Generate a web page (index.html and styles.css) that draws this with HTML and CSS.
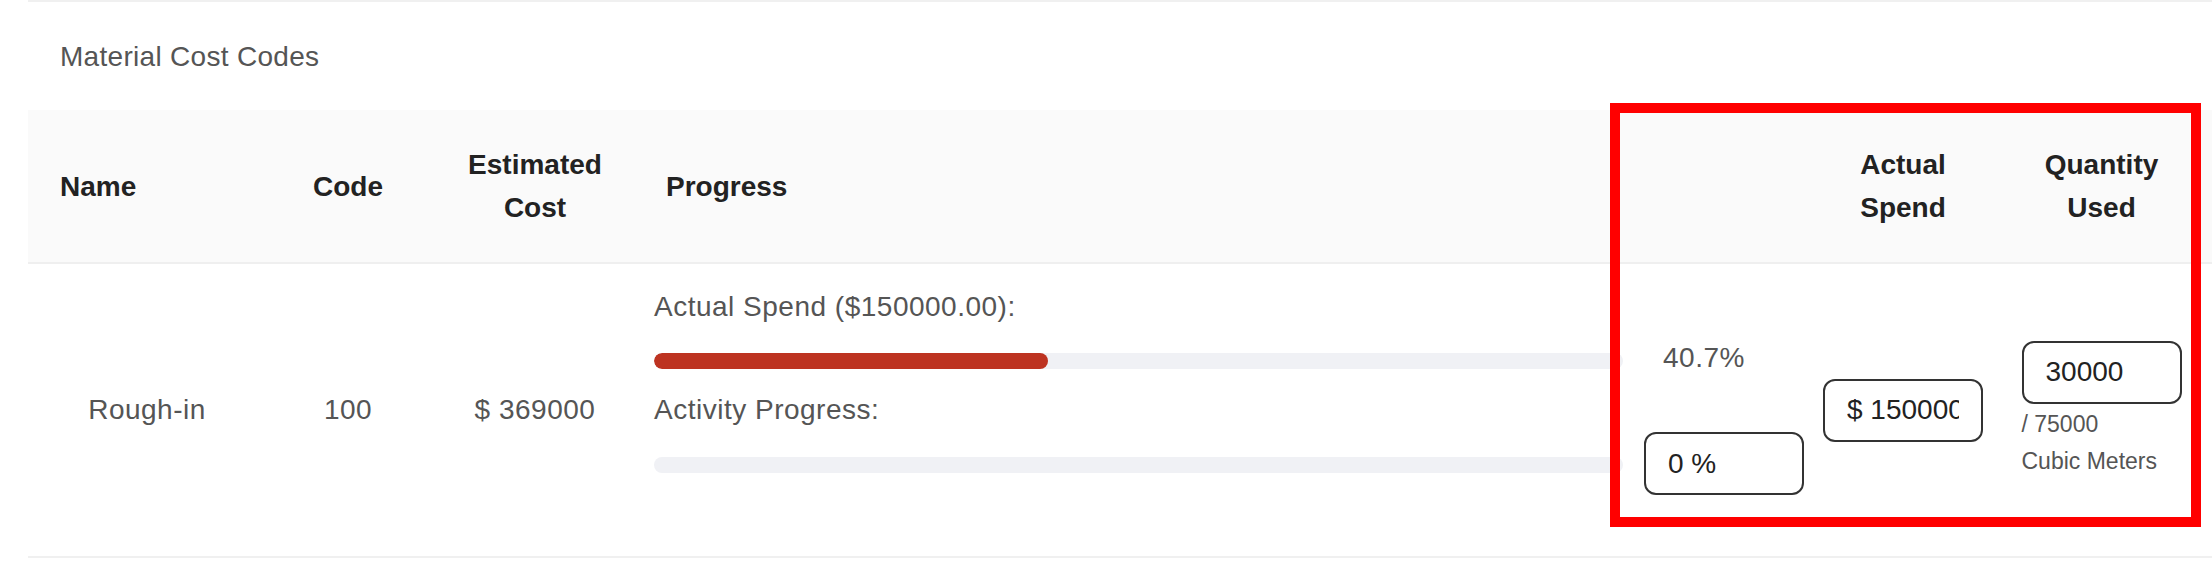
FILE: index.html
```html
<!DOCTYPE html>
<html lang="en">
<head>
<meta charset="utf-8">
<title>Material Cost Codes</title>
<link rel="stylesheet" href="styles.css">
</head>
<body>
<section class="card">
  <h2 class="card-title">Material Cost Codes</h2>
  <div class="table">
    <div class="row row-head">
      <div class="th th-name">Name</div>
      <div class="th th-center">Code</div>
      <div class="th th-center">Estimated<br>Cost</div>
      <div class="th th-progress">Progress</div>
      <div class="th"></div>
      <div class="th th-center">Actual<br>Spend</div>
      <div class="th th-center">Quantity<br>Used</div>
    </div>
    <div class="row row-body">
      <div class="td td-center">Rough-in</div>
      <div class="td td-center">100</div>
      <div class="td td-center">$ 369000</div>
      <div class="td td-progress">
        <div class="label">Actual Spend ($150000.00):</div>
        <div class="track track-first"><div class="fill" style="width: 40.7%"></div></div>
        <div class="label label-second">Activity Progress:</div>
        <div class="track track-second"><div class="fill" style="width: 0%"></div></div>
      </div>
      <div class="td td-pct">
        <div class="pct">40.7%</div>
        <input class="field" type="text" value="0 %">
      </div>
      <div class="td td-center">
        <input class="field" type="text" value="$ 150000">
      </div>
      <div class="td td-qty">
        <div class="qty">
          <input class="field" type="text" value="30000">
          <div class="qty-note">/ 75000</div>
          <div class="qty-note">Cubic Meters</div>
        </div>
      </div>
    </div>
  </div>
  <div class="highlight" aria-hidden="true"></div>
</section>
</body>
</html>
```

FILE: styles.css
```css
* { box-sizing: border-box; }

html, body {
  margin: 0;
  padding: 0;
  background: #ffffff;
}

body {
  font-family: "Liberation Sans", Arial, sans-serif;
  width: 2212px;
  height: 568px;
  overflow: hidden;
}

.card {
  position: relative;
  margin-left: 28px;
  border-top: 2px solid #f0f0f0;
}

.card-title {
  margin: 0;
  padding: 39px 0 0 32px;
  font-size: 28px;
  line-height: 32px;
  font-weight: 400;
  letter-spacing: 0.3px;
  color: #555555;
  height: 108px;
}

.row {
  display: grid;
  grid-template-columns: 238px 164px 210px 990px 185px 176px 221px;
}

.row-head {
  height: 154px;
  background: #fafafa;
  border-bottom: 2px solid #efefef;
  align-items: center;
}

.row-body {
  height: 294px;
  border-bottom: 2px solid #f0f0f0;
}

.th {
  font-size: 28px;
  line-height: 43px;
  font-weight: 700;
  color: #222222;
}

.th-name { padding-left: 32px; }
.th-center { text-align: center; }
.th-progress { padding-left: 26px; }

.td {
  font-size: 28px;
  line-height: 32px;
  color: #555555;
  letter-spacing: 0.5px;
}

.td-center {
  align-self: center;
  text-align: center;
}

.td-progress {
  padding: 27px 7px 0 14px;
}

.label-second { margin-top: 25px; }

.track {
  height: 16px;
  border-radius: 8px;
  background: #f0f1f5;
  overflow: hidden;
}

.track-first { margin-top: 30px; }
.track-second { margin-top: 31px; }

.fill {
  height: 100%;
  border-radius: 8px;
  background: #bd3321;
}

.td-pct {
  padding: 78px 0 0 14px;
  display: flex;
  flex-direction: column;
  align-items: flex-start;
}

.pct {
  margin-left: 19px;
  margin-bottom: 58px;
}

.field {
  display: block;
  width: 160px;
  height: 63px;
  margin: 0;
  padding: 0 22px;
  border: 2px solid #333333;
  border-radius: 12px;
  background: #ffffff;
  font-family: "Liberation Sans", Arial, sans-serif;
  font-size: 28px;
  color: #222222;
  outline: none;
}

.td-center .field { margin: 0 auto; }

.td-qty {
  align-self: center;
  display: flex;
  justify-content: center;
}

.qty {
  display: flex;
  flex-direction: column;
  align-items: flex-start;
}

.qty .field { margin-bottom: 2px; }

.qty-note {
  font-size: 23px;
  line-height: 37px;
  color: #555555;
  letter-spacing: 0;
}

.highlight {
  position: absolute;
  left: 1582px;
  top: 101px;
  width: 591px;
  height: 424px;
  border: 10px solid #ff0000;
  pointer-events: none;
}
```
